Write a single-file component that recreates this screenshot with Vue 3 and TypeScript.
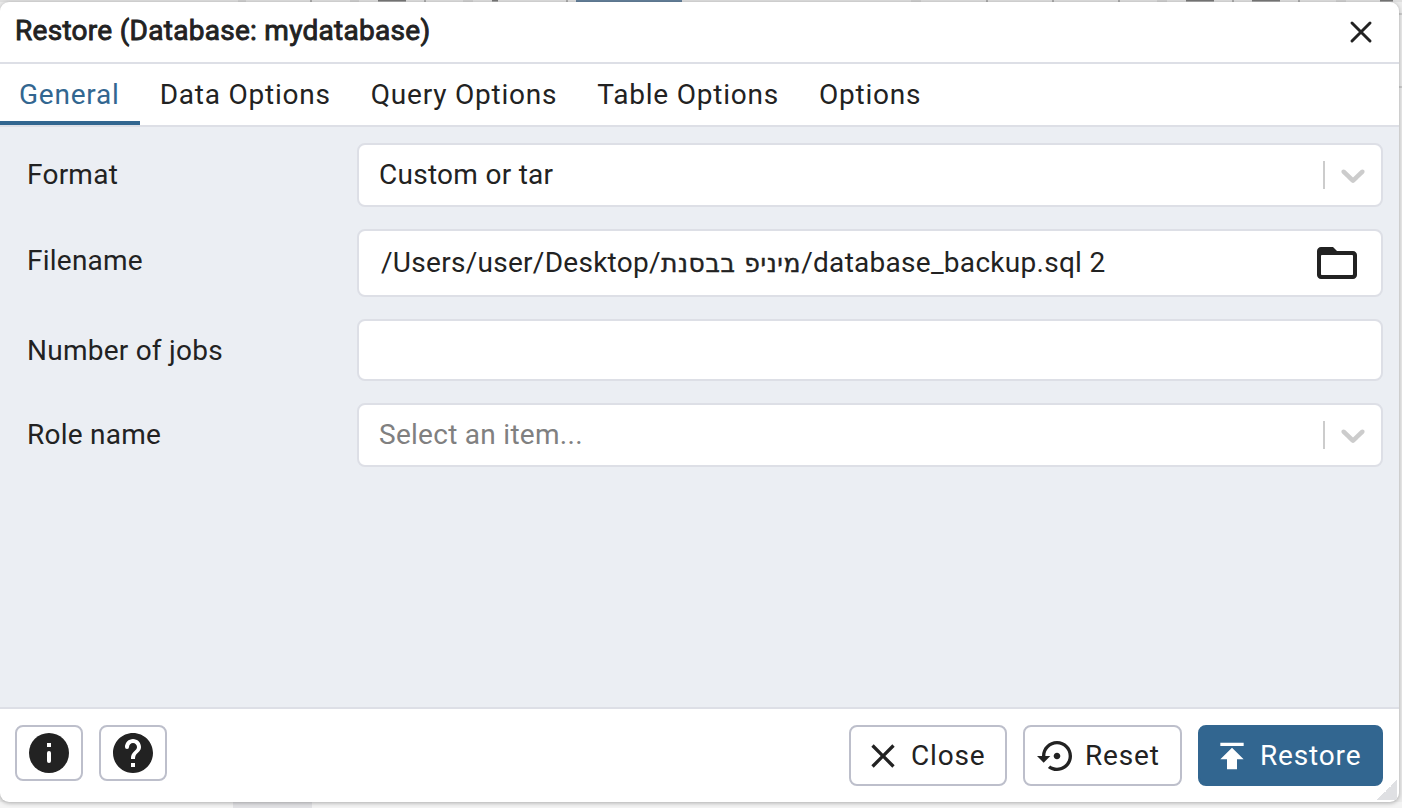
<script setup lang="ts">
import { ref } from 'vue'

interface Field {
  label: string
  kind: 'select' | 'file' | 'input'
  value: string
  cls: string
}

const tabs: string[] = ['General', 'Data Options', 'Query Options', 'Table Options', 'Options']
const active = ref<string>('General')

const fields: Field[] = [
  { label: 'Format', kind: 'select', value: 'Custom or tar', cls: 'format' },
  { label: 'Filename', kind: 'file', value: '', cls: 'filename' },
  { label: 'Number of jobs', kind: 'input', value: '', cls: 'jobs' },
  { label: 'Role name', kind: 'select', value: '', cls: 'role' },
]
</script>

<template>
  <div class="page">
    <svg class="backdrop" width="1402" height="808" viewBox="0 0 1402 808">
      <rect width="1402" height="808" fill="#ebebeb" />
      <rect width="1402" height="2" fill="#dedede" />
      <path d="M311 0v2M425 0v2M567 0v2M987 0v2M1053 0v2M1119 0v2M1233 0v2M1299 0v2" stroke="#aaa" stroke-width="2" />
      <path d="M378 0h28M492 0h6M1186 0h28M1252 0h28M1380 0h13" stroke="#777" stroke-width="3" />
      <path d="M238 0h8M350 0h9M463 0h10M911 0h10M1157 0h10M1336 0h10" stroke="#cfcfcf" stroke-width="4" />
      <rect x="576" width="106" height="2" fill="#64809a" />
      <path d="M1399 14h3M1399 87h3" stroke="#ccc" stroke-width="2" />
      <rect y="802" width="1402" height="6" fill="#f3f3f3" />
      <rect x="233" y="802" width="79" height="6" fill="#e2e2e5" />
    </svg>
    <section class="dialog">
      <header class="title-bar">
        <span class="title">Restore (Database: mydatabase)</span>
        <svg class="title-close" width="24" height="24" viewBox="0 0 24 24">
          <path d="M3 3 21 21M21 3 3 21" fill="none" stroke="#222" stroke-width="3" stroke-linecap="round" />
        </svg>
      </header>
      <nav class="tabs">
        <button v-for="t in tabs" :key="t" class="tab" :class="{ active: t === active }" @click="active = t">{{ t }}</button>
      </nav>
      <main class="form">
        <div v-for="f in fields" :key="f.label" class="row" :class="f.cls">
          <label class="label">{{ f.label }}</label>
          <div class="control">
            <template v-if="f.kind === 'select'">
              <span class="text" :class="{ placeholder: !f.value }">{{ f.value || 'Select an item...' }}</span>
              <span class="separator"></span>
              <svg class="chevron" width="40" height="40" viewBox="0 0 20 20">
                <path fill="#ccc" d="M4.516 7.548c0.436-0.446 1.043-0.481 1.576 0l3.908 3.747 3.908-3.747c0.533-0.481 1.141-0.446 1.574 0 0.436 0.445 0.408 1.197 0 1.615-0.406 0.418-4.695 4.502-4.695 4.502-0.217 0.223-0.502 0.335-0.787 0.335s-0.57-0.112-0.789-0.335c0 0-4.287-4.084-4.695-4.502s-0.436-1.17 0-1.615z" />
              </svg>
            </template>
            <template v-else-if="f.kind === 'file'">
              <span class="text path">/Users/user/Desktop/<span class="hebrew">מיניפ בבסנת</span>/database_backup.sql 2</span>
              <svg class="folder" width="48" height="48" viewBox="0 0 24 24">
                <path fill="#222" d="M10 4H4c-1.100 0-2 .9-2 2v12c0 1.100.9 2 2 2h16c1.100 0 2-.9 2-2V8c0-1.100-.9-2-2-2h-8z" />
                <rect x="4" y="8" width="16" height="10" rx="0.400" fill="#fff" />
              </svg>
            </template>
          </div>
        </div>
      </main>
      <footer class="footer">
        <div class="group">
          <button class="icon-btn" aria-label="Info">
            <svg width="48" height="48" viewBox="0 0 24 24">
              <circle cx="12" cy="12" r="10" fill="#222" />
              <path d="M12 12v4" stroke="#fff" stroke-width="2" stroke-linecap="round" />
              <path d="M11 7h2v2h-2z" fill="#fff" />
            </svg>
          </button>
          <button class="icon-btn" aria-label="Help">
            <svg width="48" height="48" viewBox="0 0 24 24">
              <path fill="#222" d="M12 2C6.480 2 2 6.480 2 12s4.480 10 10 10 10-4.480 10-10S17.520 2 12 2zm1 17h-2v-2h2v2zm2.070-7.750l-.9.920C13.450 12.900 13 13.500 13 15h-2v-.5c0-1.100.45-2.100 1.170-2.830l1.240-1.260c.37-.36.590-.86.590-1.410 0-1.100-.9-2-2-2s-2 .9-2 2H8c0-2.210 1.790-4 4-4s4 1.790 4 4c0 .88-.36 1.680-.93 2.250z" />
              <circle cx="9" cy="9" r="1" fill="#fff" />
            </svg>
          </button>
        </div>
        <div class="group">
          <button class="btn close">
            <svg width="40" height="40" viewBox="0 0 24 24">
              <path fill="#222" d="M19 6.410L17.590 5 12 10.590 6.410 5 5 6.410 10.590 12 5 17.590 6.410 19 12 13.410 17.590 19 19 17.590 13.410 12z" />
            </svg>
            <span>Close</span>
          </button>
          <button class="btn reset">
            <svg width="40" height="40" viewBox="0 0 24 24">
              <path fill="#222" d="M14 12c0-1.100-.9-2-2-2s-2 .9-2 2 .9 2 2 2 2-.9 2-2zm-2-9c-4.970 0-9 4.030-9 9H0l4 4 4-4H5c0-3.870 3.130-7 7-7s7 3.130 7 7-3.130 7-7 7c-1.510 0-2.910-.49-4.060-1.300l-1.420 1.440C8.040 20.300 9.940 21 12 21c4.970 0 9-4.030 9-9s-4.030-9-9-9z" />
            </svg>
            <span>Reset</span>
          </button>
          <button class="btn primary">
            <svg width="40" height="40" viewBox="0 0 24 24">
              <path fill="#fff" d="M5 4v2h14V4H5zm0 10h4v6h6v-6h4l-7-7-7 7z" />
            </svg>
            <span>Restore</span>
          </button>
        </div>
      </footer>
      <span class="resize"></span>
    </section>
  </div>
</template>

<style>
body {
  margin: 0;
  overflow: hidden;
}
</style>

<style scoped>
.page {
  position: relative;
  width: 1402px;
  height: 808px;
  padding-top: 2px;
  box-sizing: border-box;
  overflow: hidden;
  font-family: Roboto, 'Open Sans', sans-serif;
  font-size: 28px;
  line-height: 40px;
  color: #222;
}
.page * {
  box-sizing: border-box;
}
.backdrop {
  position: absolute;
  top: 0;
  left: 0;
}
.dialog {
  position: relative;
  display: flex;
  flex-direction: column;
  width: 1399px;
  height: 800px;
  background: #fff;
  border-radius: 9px;
  overflow: hidden;
  box-shadow: 0 1px 4px rgba(0, 0, 0, 0.3);
}
.title-bar {
  height: 62px;
  flex: none;
  display: flex;
  align-items: center;
  justify-content: space-between;
  padding: 0 26px 2px 15px;
  border-bottom: 2px solid #dddfe6;
}
.title {
  font-weight: 400;
  letter-spacing: 0.28px;
  -webkit-text-stroke: 0.9px #222;
  white-space: nowrap;
}
.title-close {
  margin-top: 2px;
}
.tabs {
  height: 63px;
  flex: none;
  display: flex;
  border-bottom: 2px solid #dddfe6;
}
button {
  font: inherit;
  color: inherit;
  margin: 0;
  cursor: pointer;
}
.tab {
  height: 61px;
  padding: 4px 20px 0;
  border: 0;
  border-bottom: 4px solid transparent;
  background: none;
  letter-spacing: 0.78px;
  white-space: nowrap;
}
.tab:first-child {
  padding-left: 19px;
}
.tab.active {
  color: #326690;
  border-bottom-color: #326690;
}
.form {
  flex: 1;
  min-height: 0;
  display: flex;
  flex-direction: column;
  gap: 22px;
  padding: 16px 16px 0 27px;
  background: #ebeef3;
  letter-spacing: 0.28px;
}
.row {
  display: flex;
  flex: none;
}
.label {
  width: 330px;
  flex: none;
  padding-top: 12px;
  letter-spacing: 0.24px;
}
.control {
  flex: 1;
  display: flex;
  align-items: center;
  padding-left: 20px;
  background: #fff;
  border: 2px solid #dddfe6;
  border-radius: 8px;
}
.format .control,
.role .control {
  height: 64px;
}
.filename .control {
  height: 68px;
}
.jobs .control {
  height: 62px;
}
.text {
  flex: 1;
  white-space: nowrap;
}
.path {
  padding-left: 2px;
}
.hebrew {
  font-family: 'DejaVu Sans', sans-serif;
  font-size: 25px;
  line-height: 1;
  letter-spacing: 0.64px;
  -webkit-text-stroke: 0.4px #222;
}
.placeholder {
  color: #808080;
}
.separator {
  width: 2px;
  height: 28px;
  background: #ccc;
}
.chevron {
  margin: 0 8px;
}
.folder {
  margin-right: 20px;
}
.footer {
  height: 95px;
  flex: none;
  display: flex;
  justify-content: space-between;
  padding: 16px 16px 0 15px;
  border-top: 2px solid #dddfe6;
}
.group {
  display: flex;
  gap: 16px;
  align-items: flex-start;
}
.icon-btn,
.btn {
  display: flex;
  align-items: center;
  background: #fff;
  border: 2px solid #bdbfcb;
  border-radius: 8px;
}
.icon-btn {
  width: 68px;
  height: 56px;
  padding: 0;
  justify-content: center;
}
.btn {
  height: 61px;
  padding: 0 0 0 12px;
  gap: 8px;
  letter-spacing: 0.84px;
}
.btn svg {
  flex: none;
}
.close {
  width: 158px;
}
.reset {
  width: 159px;
}
.primary {
  width: 185px;
  background: #326690;
  border-color: #326690;
  color: #fff;
}
.resize {
  position: absolute;
  right: 2px;
  bottom: 2px;
  width: 20px;
  height: 20px;
  background: linear-gradient(135deg, transparent 50%, #dfe0e3 50%);
}
</style>
